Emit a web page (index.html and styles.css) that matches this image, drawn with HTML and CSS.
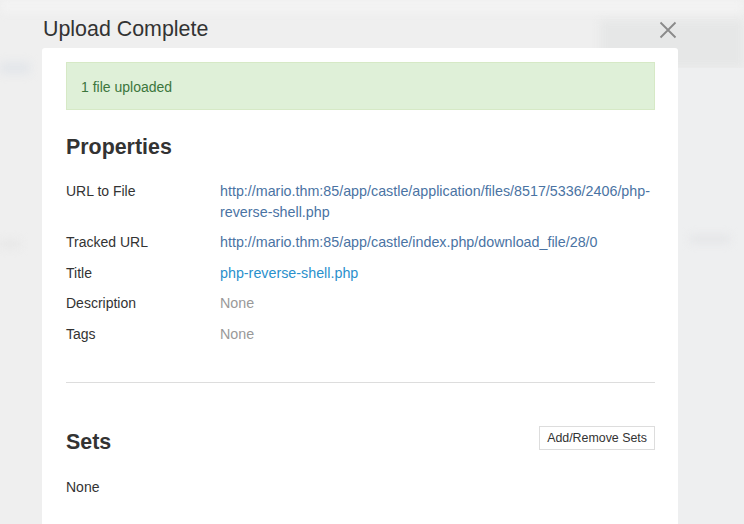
FILE: index.html
```html
<!DOCTYPE html>
<html>
<head>
<meta charset="utf-8">
<link rel="stylesheet" href="styles.css">
</head>
<body>
<div class="backdrop">
  <div class="ghost g1"></div>
  <div class="ghost g2"></div>
  <div class="ghost g3"></div>
  <div class="ghost g4"></div>
  <div class="ghost g5"></div>
  <div class="ghost g6"></div>
</div>
<div class="dialog">
  <div class="dialog-header">
    <h2 class="dialog-title">Upload Complete</h2>
    <button class="close" aria-label="Close">
      <svg width="18" height="18" viewBox="0 0 18 18"><path d="M1.5 1.5 L16.5 16.5 M16.5 1.5 L1.5 16.5" stroke="#8a8a8a" stroke-width="1.8" fill="none"/></svg>
    </button>
  </div>
  <div class="panel">
    <div class="alert">1 file uploaded</div>
    <h3 class="section-title">Properties</h3>
    <div class="props">
      <div class="label">URL to File</div>
      <div class="value"><a class="url">http://mario.thm:85/app/castle/application/files/8517/5336/2406/php-reverse-shell.php</a></div>
      <div class="label">Tracked URL</div>
      <div class="value"><a class="url">http://mario.thm:85/app/castle/index.php/download_file/28/0</a></div>
      <div class="label">Title</div>
      <div class="value"><a class="title-link">php-reverse-shell.php</a></div>
      <div class="label">Description</div>
      <div class="value muted">None</div>
      <div class="label">Tags</div>
      <div class="value muted">None</div>
    </div>
    <hr class="divider">
    <div class="sets-head">
      <h3 class="section-title sets-title">Sets</h3>
      <button class="btn">Add/Remove Sets</button>
    </div>
    <div class="sets-none">None</div>
  </div>
</div>
</body>
</html>
```
FILE: styles.css
```css
html, body {
  margin: 0;
  padding: 0;
  height: 100%;
  overflow: hidden;
}
body {
  background: #efefef;
  font-family: "Liberation Sans", Arial, Helvetica, sans-serif;
  color: #333;
  position: relative;
}
.backdrop {
  position: absolute;
  inset: 0;
  overflow: hidden;
}
.ghost {
  position: absolute;
  background: #e4e5e6;
  filter: blur(4px);
}
.g1 { left: 600px; top: 20px; width: 144px; height: 48px; background: #e6e7e7; }
.g2 { left: 678px; top: 68px; width: 66px; height: 456px; background: #eeeff0; filter: none; }
.g3 { left: 0; top: 62px; width: 30px; height: 12px; background: #e3e6ea; }
.g4 { left: 0; top: 0; width: 744px; height: 12px; background: #f3f3f3; }
.g5 { left: 690px; top: 235px; width: 40px; height: 8px; background: #e4e5e7; }
.g6 { left: 0; top: 240px; width: 20px; height: 8px; background: #e7e7e7; }

.dialog {
  position: relative;
  margin-left: 42px;
  width: 636px;
}
.dialog-header {
  height: 48px;
  display: flex;
  align-items: flex-start;
  justify-content: space-between;
}
.dialog-title {
  margin: 16px 0 0 1px;
  font-size: 21.4px;
  font-weight: normal;
  line-height: 26px;
  color: #333;
}
.close {
  margin: 21px 1px 0 0;
  padding: 0;
  border: 0;
  background: none;
  width: 18px;
  height: 18px;
  display: flex;
}
.panel {
  background: #fff;
  border-radius: 3px 3px 0 0;
  padding: 14px 23px 0 24px;
  height: 476px;
  box-sizing: border-box;
  overflow: hidden;
}
.alert {
  background: #dff0d8;
  border: 1px solid #d6e9c6;
  color: #3c763d;
  font-size: 14px;
  line-height: 20px;
  padding: 14px 14px 12px;
}
.section-title {
  margin: 25px 0 0 0;
  font-size: 21.4px;
  line-height: 24px;
  font-weight: bold;
  color: #333;
}
.props {
  margin-top: 22px;
  display: grid;
  grid-template-columns: 154px 1fr;
  row-gap: 10px;
  font-size: 14px;
  line-height: 20.5px;
}
.label { color: #333; }
.value { color: #333; font-size: 14.3px; }
.url { color: #4a73a3; }
.title-link { color: #2a90cc; }
.muted { color: #999; }
.divider {
  margin: 38px 0 0 0;
  border: 0;
  border-top: 1px solid #ddd;
}
.sets-head {
  margin-top: 47px;
  display: flex;
  justify-content: space-between;
  align-items: flex-start;
}
.sets-title { margin: 0; }
.btn {
  margin-top: -4px;
  font-family: "Liberation Sans", Arial, sans-serif;
  font-size: 12.4px;
  line-height: 15px;
  color: #333;
  background: #fff;
  border: 1px solid #ddd;
  border-radius: 0;
  padding: 4px 7px 3px;
}
.sets-none {
  margin-top: 23px;
  font-size: 14px;
  line-height: 20px;
  color: #333;
}
```
